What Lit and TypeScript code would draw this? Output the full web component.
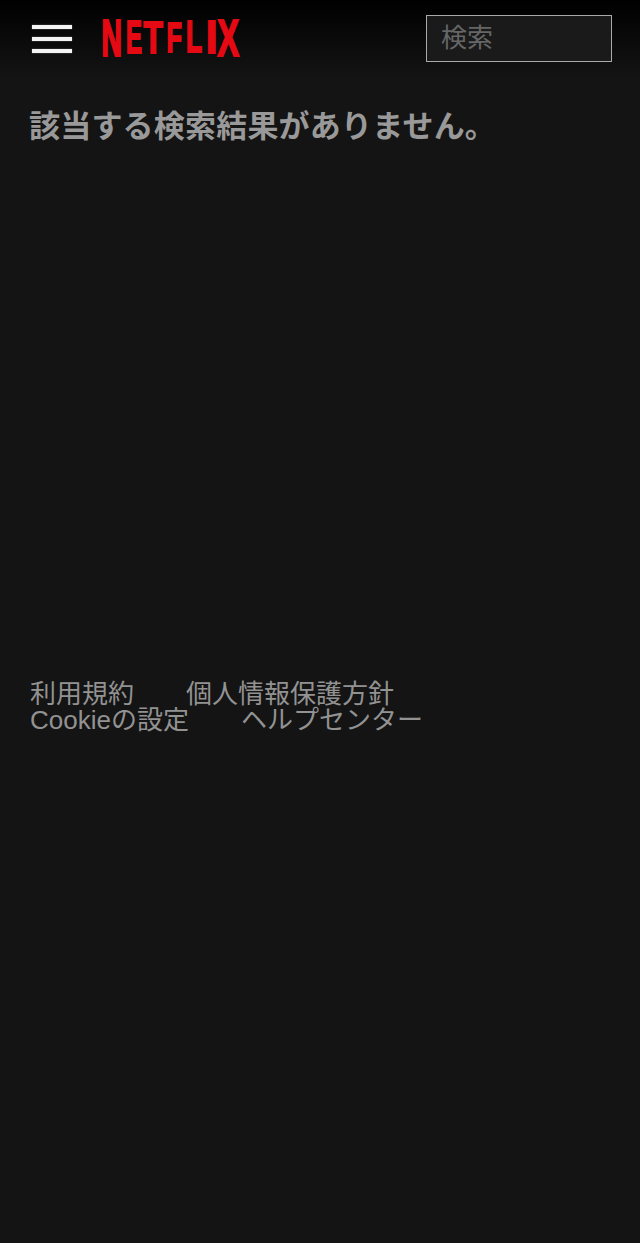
import { LitElement, html, css, svg } from "lit";
import { customElement } from "lit/decorators.js";

const LETTERS: [string, number, number, number, number][] = [
  // letter, x, baseline, scaleX, scaleY
  ["N", -1.5, 35.7, 1.18, 2.14],
  ["E", 23, 33.2, 1.0, 1.9],
  ["T", 40.5, 32.6, 1.32, 1.85],
  ["F", 63.5, 31.8, 1.05, 1.8],
  ["L", 83, 32.3, 1.1, 1.85],
  ["I", 103, 33.2, 1.7, 1.9],
  ["X", 114.5, 35.7, 1.34, 2.14],
];

@customElement("app-root")
export class AppRoot extends LitElement {
  static styles = css`
    :host {
      display: block;
      min-height: 1243px;
      background: #141414;
      color: #999;
      font-family: "Liberation Sans", "Noto Sans CJK JP", sans-serif;
    }
    .header {
      display: flex;
      align-items: center;
      height: 78px;
      padding: 0 28px 0 32px;
      box-sizing: border-box;
      background: linear-gradient(to bottom, #000, #141414);
    }
    .menu {
      display: flex;
      flex-direction: column;
      gap: 8px;
      width: 40px;
    }
    .menu span {
      display: block;
      height: 4px;
      background: #f4f4f4;
      box-shadow: 0 0 1.5px #888;
    }
    .logo {
      display: block;
      width: 138px;
      height: 38px;
      margin-left: 31px;
      margin-top: -1px;
      overflow: visible;
    }
    .logo text {
      font-family: "Liberation Sans", sans-serif;
      font-weight: 700;
      font-size: 24px;
      fill: #e50914;
      stroke: #e50914;
      stroke-width: 1px;
    }
    .search {
      margin-left: auto;
      width: 186px;
      height: 47px;
      box-sizing: border-box;
      margin-top: -1px;
      padding: 0 14px;
      border: 1.5px solid #aaa;
      background: #1a1a1a;
      color: #fff;
      font: 26px "Liberation Sans", "Noto Sans CJK JP", sans-serif;
      outline: none;
    }
    .search::placeholder {
      color: #666;
      opacity: 1;
    }
    .main {
      padding: 27px 30px 0;
    }
    h1 {
      margin: 0 0 0 -1px;
      font-size: 31px;
      letter-spacing: 0.2px;
      line-height: 44px;
      font-weight: 700;
      color: #999;
    }
    .links {
      display: flex;
      flex-wrap: wrap;
      list-style: none;
      margin: 532px 0 0;
      padding: 0;
      width: 420px;
      font-size: 26px;
      line-height: 26px;
      color: #929292;
      column-gap: 52px;
    }
  `;

  render() {
    return html`
      <header class="header">
        <div class="menu"><span></span><span></span><span></span></div>
        <svg class="logo" viewBox="0 0 138 38" role="img" aria-label="Netflix">
          ${LETTERS.map(
            ([c, x, y, sx, sy]) =>
              svg`<text transform="translate(${x} ${y}) scale(${sx} ${sy})">${c}</text>`
          )}
        </svg>
        <input class="search" placeholder="検索" />
      </header>
      <main class="main">
        <h1>該当する検索結果がありません。</h1>
        <ul class="links">
          <li>利用規約</li>
          <li>個人情報保護方針</li>
          <li>Cookieの設定</li>
          <li>ヘルプセンター</li>
        </ul>
      </main>
    `;
  }
}
